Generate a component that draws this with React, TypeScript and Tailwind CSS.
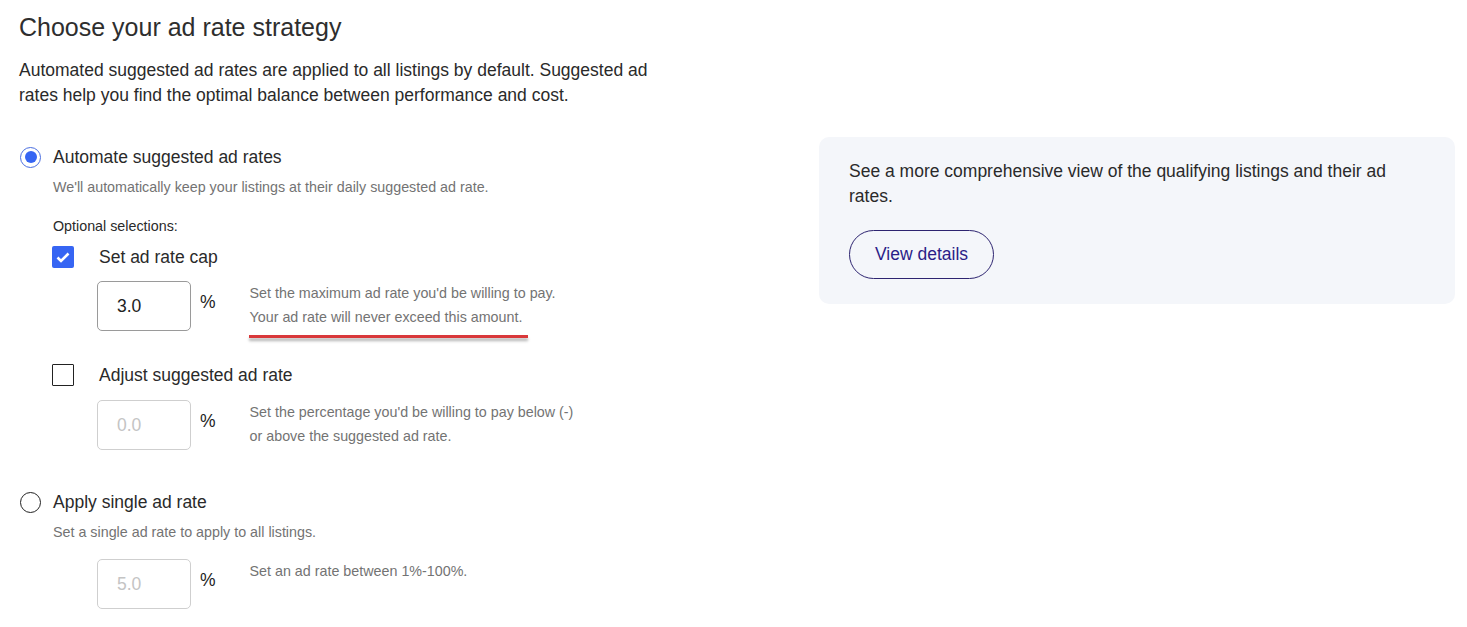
import React from "react";

const font = { fontFamily: '"Liberation Sans", Arial, sans-serif' };

type RateInputProps = {
    value: string;
    placeholder?: boolean;
    help: string[];
    underline?: boolean;
};

const RateInput = (props: RateInputProps) => {
    return (
        <div className="flex items-start">
            <div
                className={
                    "flex h-[50px] w-[94px] items-center rounded-[5px] border pl-[19px] text-[17.5px] " +
                    (props.placeholder
                        ? "border-[#cfcfcf] text-[#c4c4c4]"
                        : "border-[#9a9a9a] text-[#222]")
                }
            >
                {props.value}
            </div>
            <span className="ml-[9px] mt-[9px] text-[17.5px] leading-[24px] text-[#222]">%</span>
            <div className="relative ml-[34px] text-[14.3px] leading-[24px] text-[#737373]">
                {props.help.map((line) => (
                    <div key={line}>{line}</div>
                ))}
                {props.underline && (
                    <div className="absolute left-[-1px] top-[54px] h-[2.5px] w-[279px] bg-[#d9383a] shadow-[0_3px_3px_rgba(0,0,0,0.3)]"/>
                )}
            </div>
        </div>
    );
};

const Radio = ({checked}: { checked: boolean }) => {
    return checked ? (
        <span className="flex h-[21px] w-[21px] items-center justify-center rounded-full border-[1.5px] border-[#4a6ee0]">
            <span className="h-[12px] w-[12px] rounded-full bg-[#3665f3]"/>
        </span>
    ) : (
        <span className="h-[21px] w-[21px] rounded-full border-[1.5px] border-[#222]"/>
    );
};

const Checkbox = ({checked}: { checked: boolean }) => {
    return checked ? (
        <span className="flex h-[22px] w-[22px] items-center justify-center rounded-[2px] bg-[#3665f3]">
            <svg width="14" height="11" viewBox="0 0 14 11" fill="none">
                <path d="M1.5 5.5 L5 9 L12.5 1.5" stroke="white" strokeWidth="2.6"/>
            </svg>
        </span>
    ) : (
        <span className="h-[22px] w-[22px] rounded-[1px] border-[1.5px] border-[#222]"/>
    );
};

export default function App() {
    return (
        <div className="min-h-[627px] w-[1467px] bg-white pl-[19px] pt-[12px] text-[#2a2a2a]" style={font}>
            <h1 className="text-[25px] leading-[30px] text-[#2e2e2e]">Choose your ad rate strategy</h1>
            <p className="mt-[16px] w-[650px] text-[17.5px] leading-[25px]">
                Automated suggested ad rates are applied to all listings by default. Suggested ad
                rates help you find the optimal balance between performance and cost.
            </p>

            <div className="mt-[29px] flex items-start">
                {/* left column: strategy options */}
                <div className="w-[800px] pt-[8px]">
                    <div className="flex items-center pl-px">
                        <Radio checked/>
                        <span className="ml-[12px] text-[17.5px] leading-[24px]">Automate suggested ad rates</span>
                    </div>
                    <div className="mt-[8px] pl-[34px] text-[14.3px] leading-[20px] text-[#737373]">
                        We'll automatically keep your listings at their daily suggested ad rate.
                    </div>
                    <div className="mt-[19px] pl-[34px] text-[14.3px] leading-[20px] text-[#2a2a2a]">
                        Optional selections:
                    </div>

                    <div className="mt-[10px] flex items-center pl-[33px]">
                        <Checkbox checked/>
                        <span className="ml-[25px] text-[17.5px] leading-[22px]">Set ad rate cap</span>
                    </div>
                    <div className="mt-[13px] pl-[78px]">
                        <RateInput
                            value="3.0"
                            help={["Set the maximum ad rate you'd be willing to pay.", "Your ad rate will never exceed this amount."]}
                            underline
                        />
                    </div>

                    <div className="mt-[33px] flex items-center pl-[33px]">
                        <Checkbox checked={false}/>
                        <span className="ml-[25px] text-[17.5px] leading-[22px]">Adjust suggested ad rate</span>
                    </div>
                    <div className="mt-[14px] pl-[78px]">
                        <RateInput
                            value="0.0"
                            placeholder
                            help={["Set the percentage you'd be willing to pay below (-)", "or above the suggested ad rate."]}
                        />
                    </div>

                    <div className="mt-[40px] flex items-center pl-px">
                        <Radio checked={false}/>
                        <span className="ml-[12px] text-[17.5px] leading-[24px]">Apply single ad rate</span>
                    </div>
                    <div className="mt-[8px] pl-[34px] text-[14.3px] leading-[20px] text-[#737373]">
                        Set a single ad rate to apply to all listings.
                    </div>
                    <div className="mt-[17px] pl-[78px]">
                        <RateInput value="5.0" placeholder help={["Set an ad rate between 1%-100%."]}/>
                    </div>
                </div>

                {/* right column: details panel */}
                <div className="w-[636px] rounded-[10px] bg-[#f4f6fa] px-[30px] pb-[25px] pt-[22px]">
                    <p className="text-[17.5px] leading-[25px]">
                        See a more comprehensive view of the qualifying listings and their ad rates.
                    </p>
                    <button className="mt-[21px] h-[49px] w-[145px] rounded-full border border-[#2d2470] text-[17.5px] text-[#2b1d88]">
                        View details
                    </button>
                </div>
            </div>
        </div>
    );
}
